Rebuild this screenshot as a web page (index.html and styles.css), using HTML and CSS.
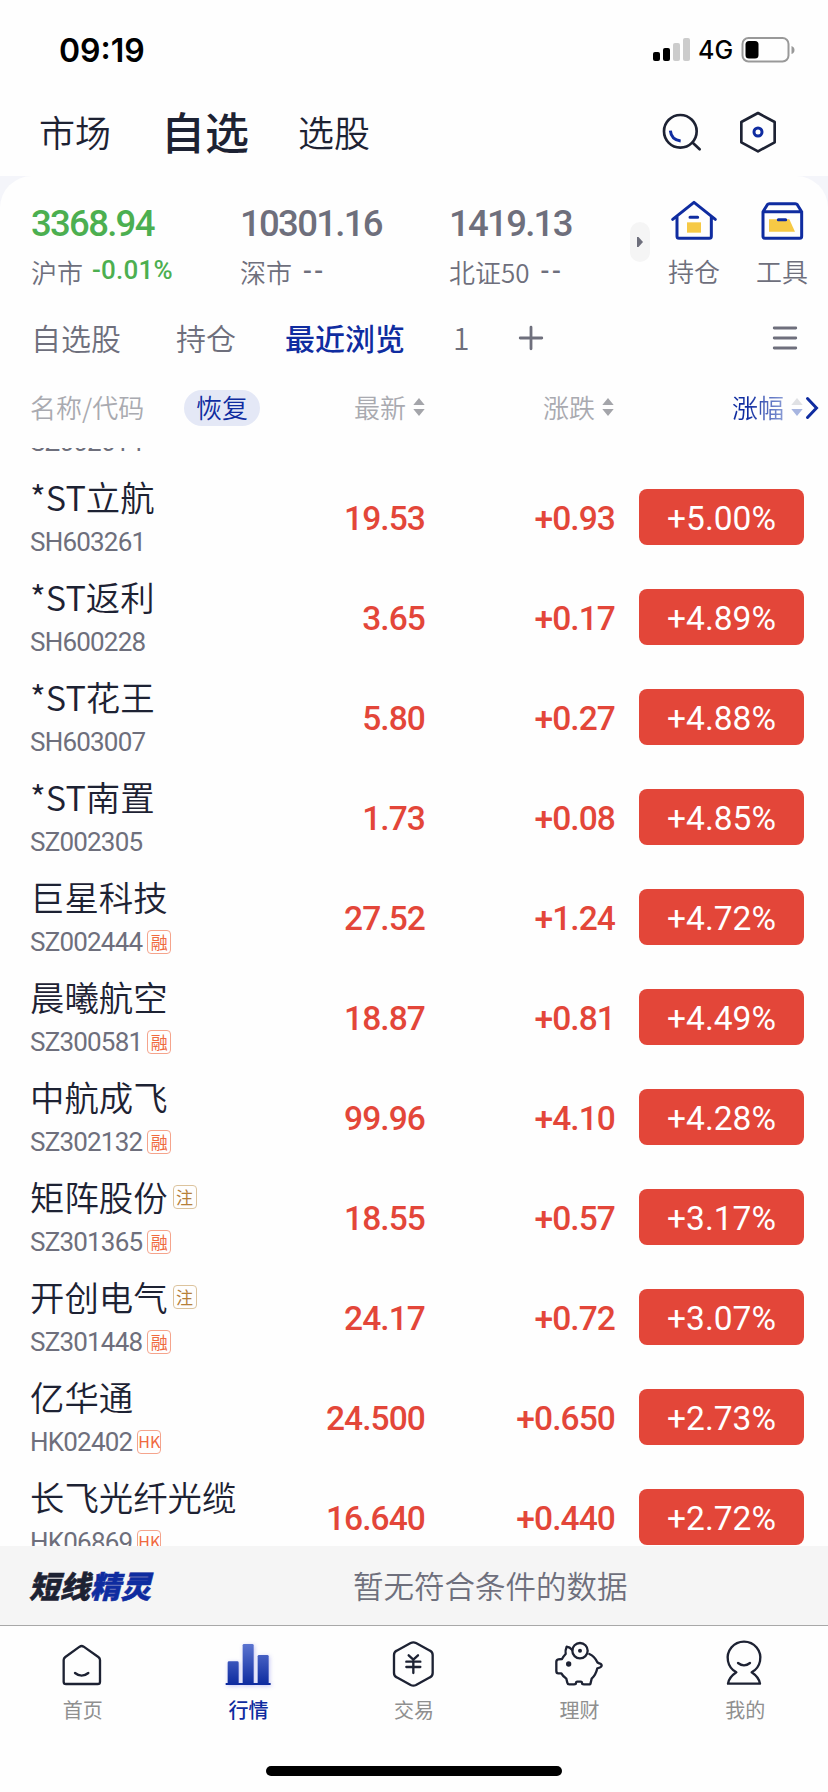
FILE: index.html
```html
<!DOCTYPE html>
<html lang="zh-CN">
<head>
    <meta charset="UTF-8">
    <meta name="viewport" content="width=device-width, initial-scale=1.0">
    <title>自选</title>
    <link rel="stylesheet" href="styles.css">
</head>
<body>
    <div class="status-bar">
        <span class="time">09:19</span>
        <svg class="signal" viewBox="0 0 37 24">
            <rect x="0" y="14" width="7" height="9" rx="2"/>
            <rect x="10" y="10" width="7" height="13" rx="2"/>
            <rect x="20" y="5" width="7" height="18" rx="2" fill="#ccc"/>
            <rect x="30" y="0" width="7" height="23" rx="2" fill="#ccc"/>
        </svg>
        <span class="network">4G</span>
        <svg class="battery" viewBox="0 0 54 26">
            <rect x="1" y="1" width="46" height="23.5" rx="6" fill="none" stroke="#999" stroke-width="2"/>
            <rect x="4" y="4" width="13" height="17.5" rx="3.5"/>
            <path d="M50 9q3 1 3 4t-3 4z" fill="#999"/>
        </svg>
    </div>

    <header class="top-nav">
        <a class="nav-item">市场</a>
        <a class="nav-item active">自选</a>
        <a class="nav-item">选股</a>
        <svg class="icon search" viewBox="0 0 132 132">
            <circle cx="58" cy="64" r="49"/>
            <path d="M96 99l20 19"/>
            <path class="blue" stroke-linecap="butt" d="M28 62q3 28 31 31"/>
        </svg>
        <svg class="icon settings" viewBox="0 0 132 132">
            <path d="M60 9l50 27v61l-50 27-50-27V36z"/>
            <circle class="blue" cx="60" cy="66" r="12"/>
        </svg>
    </header>

    <div class="panel-wrap">
        <div class="panel">
            <section class="indices">
                <div class="index">
                    <div class="index-value down">3368.94</div>
                    <div class="index-label">沪市<span class="num down">-0.01%</span></div>
                </div>
                <div class="index">
                    <div class="index-value">10301.16</div>
                    <div class="index-label">深市<span class="num dash">--</span></div>
                </div>
                <div class="index">
                    <div class="index-value">1419.13</div>
                    <div class="index-label">北证50<span class="num dash">--</span></div>
                </div>
                <div class="expand">
                    <svg viewBox="0 0 6 10"><path d="M0 0h1.500l4.500 5-4.500 5H0z"/></svg>
                </div>
                <div class="shortcut">
                    <svg viewBox="0 0 144 144">
                        <rect class="fill" x="51" y="73" width="42" height="31"/>
                        <path d="M8 64l64-51 64 51M21 56v59q0 6 6 6h91q6 0 6-6V56M60 58h23"/>
                    </svg>
                    <span>持仓</span>
                </div>
                <div class="shortcut">
                    <svg viewBox="0 0 144 144">
                        <path class="fill" d="M33 64h61l17 37H33z"/>
                        <path d="M15 41h116v74q0 6-6 6H21q-6 0-6-6V41l13-21q2-3 6-3h78q4 0 6 3l13 21M61 65h22"/>
                    </svg>
                    <span>工具</span>
                </div>
            </section>

            <nav class="groups">
                <a class="group">自选股</a>
                <a class="group">持仓</a>
                <a class="group active">最近浏览</a>
                <a class="group">1</a>
                <svg class="add" viewBox="0 0 24 24"><path d="M12 1.200v21.600M1.200 12h21.600"/></svg>
                <svg class="menu" viewBox="0 0 24 24"><path d="M1.200 2h21.600M1.200 12h21.600M1.200 22h21.600"/></svg>
            </nav>

            <div class="table-head">
                <span class="col-name">名称/代码</span>
                <span class="restore">恢复</span>
                <span class="col-price">最新<svg class="sort" viewBox="0 0 12 18"><path d="M6 0l5.700 7H.3zM6 18l5.700-7H.3z"/></svg></span>
                <span class="col-change">涨跌<svg class="sort" viewBox="0 0 12 18"><path d="M6 0l5.700 7H.3zM6 18l5.700-7H.3z"/></svg></span>
                <span class="col-percent"><span class="fade-text">涨幅</span><svg class="sort" viewBox="0 0 12 18"><path fill="#e0e1e4" d="M6 0l5.700 7H.3z"/><path fill="#a7b5e0" d="M6 18l5.700-7H.3z"/></svg></span>
                <svg class="more" viewBox="0 0 12 22"><path d="M1.500 1.500L10.500 11l-9 9.500"/></svg>
            </div>
        </div>
    </div>

    <main class="stock-list">
        <div class="stock">
            <div class="stock-info"><div class="name"></div><div class="code">SZ002614</div></div>
        </div>
        <div class="stock">
            <div class="stock-info"><div class="name">*ST立航</div><div class="code">SH603261</div></div>
            <div class="price">19.53</div><div class="change">+0.93</div><div class="percent">+5.00%</div>
        </div>
        <div class="stock">
            <div class="stock-info"><div class="name">*ST返利</div><div class="code">SH600228</div></div>
            <div class="price">3.65</div><div class="change">+0.17</div><div class="percent">+4.89%</div>
        </div>
        <div class="stock">
            <div class="stock-info"><div class="name">*ST花王</div><div class="code">SH603007</div></div>
            <div class="price">5.80</div><div class="change">+0.27</div><div class="percent">+4.88%</div>
        </div>
        <div class="stock">
            <div class="stock-info"><div class="name">*ST南置</div><div class="code">SZ002305</div></div>
            <div class="price">1.73</div><div class="change">+0.08</div><div class="percent">+4.85%</div>
        </div>
        <div class="stock">
            <div class="stock-info"><div class="name">巨星科技</div><div class="code">SZ002444<i class="tag">融</i></div></div>
            <div class="price">27.52</div><div class="change">+1.24</div><div class="percent">+4.72%</div>
        </div>
        <div class="stock">
            <div class="stock-info"><div class="name">晨曦航空</div><div class="code">SZ300581<i class="tag">融</i></div></div>
            <div class="price">18.87</div><div class="change">+0.81</div><div class="percent">+4.49%</div>
        </div>
        <div class="stock">
            <div class="stock-info"><div class="name">中航成飞</div><div class="code">SZ302132<i class="tag">融</i></div></div>
            <div class="price">99.96</div><div class="change">+4.10</div><div class="percent">+4.28%</div>
        </div>
        <div class="stock">
            <div class="stock-info"><div class="name">矩阵股份<i class="tag note">注</i></div><div class="code">SZ301365<i class="tag">融</i></div></div>
            <div class="price">18.55</div><div class="change">+0.57</div><div class="percent">+3.17%</div>
        </div>
        <div class="stock">
            <div class="stock-info"><div class="name">开创电气<i class="tag note">注</i></div><div class="code">SZ301448<i class="tag">融</i></div></div>
            <div class="price">24.17</div><div class="change">+0.72</div><div class="percent">+3.07%</div>
        </div>
        <div class="stock">
            <div class="stock-info"><div class="name">亿华通</div><div class="code">HK02402<i class="tag hk">HK</i></div></div>
            <div class="price">24.500</div><div class="change">+0.650</div><div class="percent">+2.73%</div>
        </div>
        <div class="stock">
            <div class="stock-info"><div class="name">长飞光纤光缆</div><div class="code">HK06869<i class="tag hk">HK</i></div></div>
            <div class="price">16.640</div><div class="change">+0.440</div><div class="percent">+2.72%</div>
        </div>
    </main>

    <div class="ticker">
        <div class="ticker-logo">短线<span>精灵</span></div>
        <div class="ticker-text">暂无符合条件的数据</div>
    </div>

    <footer class="tab-bar">
        <a class="tab">
            <svg viewBox="0 0 144 144"><path d="M62 20q6-4 12 0l44 31q5 4 5 9v65q0 7-7 7H21q-7 0-7-7V60q0-5 5-9zM48 99q20 16 40 0"/></svg>
            <span>首页</span>
        </a>
        <a class="tab active">
            <svg class="bars" viewBox="0 0 144 144">
                <defs>
                    <linearGradient id="bar" x1="0" y1="12" x2="0" y2="132" gradientUnits="userSpaceOnUse">
                        <stop offset="0" stop-color="#5b74d0"/>
                        <stop offset="1" stop-color="#0f2ca0"/>
                    </linearGradient>
                </defs>
                <rect x="11" y="64" width="33" height="70" rx="4" fill="url(#bar)"/>
                <rect x="56" y="12" width="33" height="122" rx="4" fill="url(#bar)"/>
                <rect x="101" y="45" width="33" height="89" rx="4" fill="url(#bar)"/>
                <rect x="5" y="129" width="135" height="6" fill="#0f2ca0"/>
            </svg>
            <span>行情</span>
        </a>
        <a class="tab">
            <svg viewBox="0 0 144 144">
                <path d="M62 9q8-4 16 0l42 23q8 4 8 13v54q0 9-8 13l-42 23q-8 4-16 0l-42-23q-8-4-8-13V45q0-9 8-13z"/>
                <path d="M56 46l14 13 14-13M70 59v40M49 65h42M49 81h42"/>
            </svg>
            <span>交易</span>
        </a>
        <a class="tab">
            <svg viewBox="5 0 144 144">
                <path d="M54 30q-8-9-17-10-5 12-3 22-6 6-11 15l-11 1q-6 1-6 8v27q0 7 6 7h9q5 9 15 16l3 12q1 5 6 5h14q6 0 6-4 0-4 4-4h10q4 0 4 4t6 4h14q6 0 6-5l3-12q12-10 17-31 12-2 13-8 0-5-7-7l-6-3q-8-18-24-25"/>
                <circle cx="77" cy="32" r="23"/>
                <circle class="dot" cx="77" cy="32" r="6"/>
                <circle class="dot" cx="43" cy="72" r="8"/>
            </svg>
            <span>理财</span>
        </a>
        <a class="tab">
            <svg viewBox="0 0 144 144"><path d="M46 97A49 49 0 1 1 92 97Q114 112 117 131H21Q24 112 46 97zM51 69q18 14 36 0"/></svg>
            <span>我的</span>
        </a>
        <div class="home-indicator"></div>
    </footer>
</body>
</html>
```
FILE: styles.css
```css
* {
    margin: 0;
    padding: 0;
    box-sizing: border-box;
}

body {
    width: 828px;
    height: 1792px;
    display: flex;
    flex-direction: column;
    overflow: hidden;
    background: #fefefe;
    color: #1d2233;
    font-family: "Noto Sans CJK SC", sans-serif;
}

svg {
    display: block;
    flex-shrink: 0;
    overflow: visible;
}

/* status bar */
.status-bar {
    height: 88px;
    padding: 12px 32px 0 59px;
    display: flex;
    align-items: center;
    color: #000;
    font-family: Inter, sans-serif;
}

.time {
    flex: 1;
    font-size: 32px;
    font-weight: 600;
}

.signal {
    width: 37px;
    height: 24px;
}

.network {
    width: 51px;
    padding-left: 8px;
    font-size: 25px;
    font-weight: 500;
}

.battery {
    width: 55px;
    height: 26px;
}

/* top navigation */
.top-nav {
    height: 88px;
    padding: 0 46px 0 39px;
    display: flex;
    align-items: center;
}

.nav-item {
    margin-right: 50px;
    padding-bottom: 3px;
    font-size: 36px;
    font-weight: 350;
}

.nav-item.active {
    margin-right: 49px;
    font-size: 44px;
    font-weight: 500;
}

.icon {
    width: 44px;
    height: 44px;
    fill: none;
    stroke: #1d2233;
    stroke-width: 8;
    stroke-linecap: round;
    stroke-linejoin: round;
}

.icon .blue {
    stroke: #0f2ca0;
    stroke-width: 9;
}

.search {
    margin-left: auto;
    margin-right: 33px;
}

/* indices panel */
.panel-wrap {
    background: #f4f5fa;
}

.panel {
    height: 272px;
    background: #fefefe;
    border-radius: 32px 32px 0 0;
}

.indices {
    height: 124px;
    padding: 22px 0 0 31px;
    display: flex;
    color: #6e6f7c;
}

.index {
    width: 209px;
    flex-shrink: 0;
}

.index-value {
    height: 50px;
    line-height: 52px;
    font-family: Roboto, sans-serif;
    font-size: 36.5px;
    font-weight: 500;
    letter-spacing: -1.7px;
}

.index-label {
    height: 46px;
    display: flex;
    align-items: center;
    font-size: 26px;
    font-weight: 350;
    white-space: nowrap;
}

.num {
    margin-left: 9px;
    padding-bottom: 3px;
    font-family: Roboto, sans-serif;
    font-weight: 500;
    letter-spacing: 0.2px;
}

.dash {
    margin-left: 11px;
    padding-bottom: 0;
    letter-spacing: 2.5px;
}

.down {
    color: #4caf50;
}

.expand {
    width: 20px;
    height: 40px;
    margin: 24px 20px 0 -28px;
    display: flex;
    flex-shrink: 0;
    align-items: center;
    justify-content: center;
    border-radius: 10px;
    background: #f5f5f5;
}

.expand svg {
    width: 6px;
    height: 10px;
    fill: #6e6f7c;
}

.shortcut {
    width: 48px;
    margin-right: 40px;
    display: flex;
    flex-direction: column;
    flex-shrink: 0;
    align-items: center;
    font-size: 26px;
    font-weight: 350;
    line-height: 46px;
    white-space: nowrap;
}

.shortcut svg {
    width: 48px;
    height: 48px;
    margin-bottom: 2px;
    fill: none;
    stroke: #0f2ca0;
    stroke-width: 9;
    stroke-linecap: round;
    stroke-linejoin: round;
}

.shortcut .fill {
    fill: #f6c945;
    stroke: none;
}

/* watchlist groups */
.groups {
    height: 76px;
    padding: 0 31px 0 31px;
    display: flex;
    align-items: center;
    color: #6e6f7c;
}

.group {
    margin-right: 55px;
    padding-bottom: 2px;
    font-size: 30px;
    font-weight: 350;
}

.group:nth-child(2) {
    margin-right: 49px;
}

.group.active {
    margin-right: 48px;
    color: #0f2ca0;
    font-weight: 500;
}

.group:nth-child(4) {
    margin-right: 50px;
}

.add,
.menu {
    width: 24px;
    height: 24px;
    fill: none;
    stroke: #6e6f7c;
    stroke-width: 2.8;
    stroke-linecap: round;
}

.menu {
    margin-left: auto;
}

.table-head {
    height: 64px;
    padding: 0 9px 0 30px;
    display: flex;
    align-items: center;
    color: #a9aab0;
    font-size: 26px;
    font-weight: 350;
    line-height: 36px;
}

.col-name {
    width: 154px;
    padding-bottom: 2px;
}

.restore {
    width: 76px;
    height: 36px;
    line-height: 34px;
    border-radius: 18px;
    background: #e4e8f6;
    color: #0f2ca0;
    text-align: center;
}

.col-price,
.col-change,
.col-percent {
    padding-bottom: 2px;
    display: flex;
    align-items: center;
    justify-content: flex-end;
}

.col-price {
    width: 165px;
}

.col-change,
.col-percent {
    width: 189px;
}

.fade-text {
    background: linear-gradient(90deg, #0f2ca0 30%, #8b9dd6);
    -webkit-background-clip: text;
    background-clip: text;
    color: transparent;
}

.sort {
    width: 12px;
    height: 18px;
    margin-left: 7px;
    fill: #a4a5aa;
}

.more {
    width: 12px;
    height: 22px;
    margin-left: 3px;
    fill: none;
    stroke: #0f2ca0;
    stroke-width: 3;
    stroke-linecap: round;
}

/* stock list */
.stock-list {
    height: 1098px;
    overflow: hidden;
}

.stock {
    height: 100px;
    padding-left: 30px;
    display: flex;
    align-items: center;
    font-family: Roboto, "Noto Sans CJK SC", sans-serif;
    font-size: 33.5px;
    font-weight: 500;
}

.stock:first-child {
    margin-top: -81px;
}

.stock-info {
    width: 235px;
}

.name {
    height: 46px;
    display: flex;
    align-items: center;
    font-family: "Noto Sans CJK SC", sans-serif;
    font-size: 34.4px;
    font-weight: 350;
    white-space: nowrap;
}

.code {
    height: 42px;
    padding-top: 3px;
    display: flex;
    align-items: center;
    color: #6e6f7c;
    font-size: 26px;
    font-weight: 450;
    letter-spacing: -0.8px;
}

.tag {
    width: 24px;
    height: 24px;
    margin-left: 5px;
    border: 1px solid #f5a48c;
    border-radius: 4px;
    color: #f0693f;
    font-family: "Noto Sans CJK SC", sans-serif;
    font-size: 17px;
    font-style: normal;
    font-weight: 400;
    letter-spacing: 0;
    line-height: 21px;
    text-align: center;
}

.tag.note {
    margin-left: 5px;
    margin-top: 2px;
    border-color: #dcc39d;
    color: #b5803a;
}

.tag.hk {
    display: flex;
    justify-content: center;
    font-size: 16px;
}

.price {
    width: 160px;
    padding-top: 2px;
    color: #e34639;
    letter-spacing: -0.9px;
    text-align: right;
}

.change {
    width: 190px;
    padding-top: 2px;
    color: #e34639;
    letter-spacing: -0.9px;
    text-align: right;
}

.percent {
    width: 165px;
    height: 56px;
    margin-left: 24px;
    border-radius: 8px;
    background: #e34639;
    color: #fff;
    font-weight: 450;
    line-height: 59px;
    text-align: center;
}

/* bottom ticker */
.ticker {
    height: 80px;
    padding: 0 0 2px 29px;
    display: flex;
    align-items: center;
    border-bottom: 1px solid #a8a8a8;
    background: #f5f5f5;
}

.ticker-logo {
    width: 324px;
    font-size: 30.5px;
    font-style: italic;
    font-weight: 900;
    -webkit-text-stroke: 0.5px currentColor;
}

.ticker-logo span {
    color: #0f2ca0;
}

.ticker-text {
    color: #6e6f7c;
    font-size: 30.5px;
    font-weight: 350;
}

/* tab bar */
.tab-bar {
    height: 166px;
    padding-top: 14px;
    display: flex;
    flex-wrap: wrap;
    align-content: flex-start;
}

.tab {
    width: 20%;
    display: flex;
    flex-direction: column;
    align-items: center;
    color: #8f8f8f;
    font-size: 20px;
    line-height: 28px;
}

.tab svg {
    width: 48px;
    height: 48px;
    margin-bottom: 8px;
    fill: none;
    stroke: #1d2233;
    stroke-width: 7;
    stroke-linecap: round;
    stroke-linejoin: round;
}

.tab .dot {
    fill: #1d2233;
    stroke: none;
}

.tab .bars {
    stroke: none;
    filter: drop-shadow(1px 1px 2px rgba(60, 60, 220, 0.3));
}

.tab.active {
    color: #0f2ca0;
    font-weight: 500;
}

.home-indicator {
    width: 296px;
    height: 10px;
    margin: 42px auto 0;
    border-radius: 5px;
    background: #000;
}
```
